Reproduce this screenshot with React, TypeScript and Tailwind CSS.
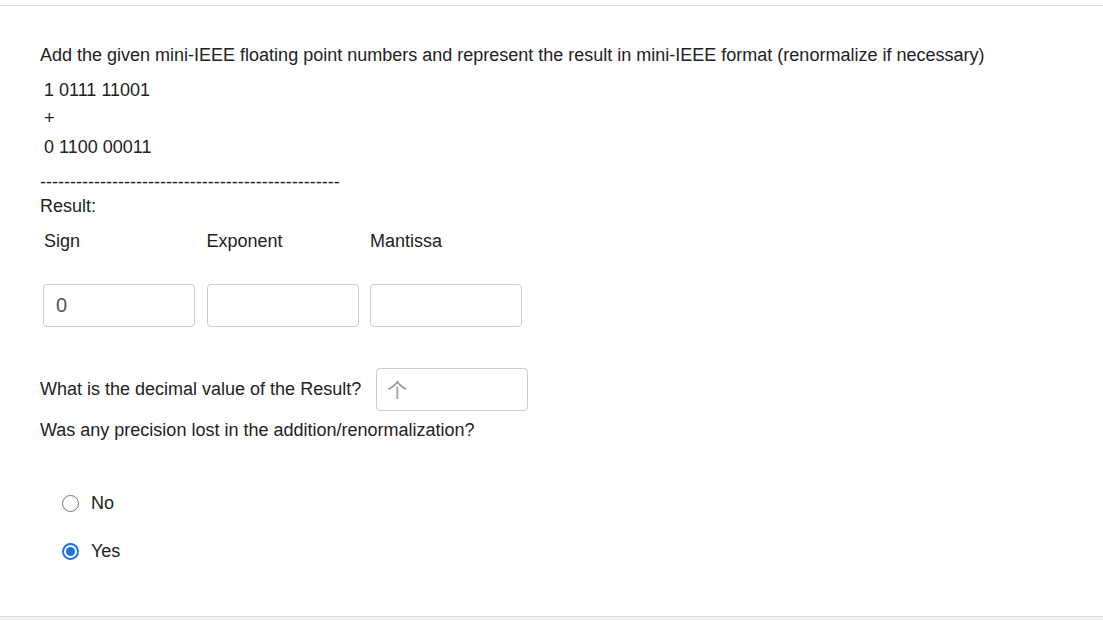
import React from "react";

const FONT = '"Liberation Sans", Arial, "Noto Sans CJK SC", sans-serif';

function Radio({ label, checked }: { label: string; checked?: boolean }) {
  return (
    <label className="flex items-center h-6 pl-[22px] cursor-pointer">
      {checked ? (
        <span className="w-[17px] h-[17px] rounded-full border-2 border-[#1a73e8] flex items-center justify-center">
          <span className="w-[9px] h-[9px] rounded-full bg-[#1a73e8]" />
        </span>
      ) : (
        <span className="w-[17px] h-[17px] rounded-full border border-[#767676] bg-white" />
      )}
      <span className="ml-3">{label}</span>
    </label>
  );
}

const field =
  "mt-[31px] h-[43px] border border-[#cccccc] rounded px-[12px] text-xl text-[#555] outline-none font-['Liberation_Sans',Arial,sans-serif]";

export default function App() {
  const [answer, setAnswer] = React.useState("yes");

  return (
    <div className="min-h-screen bg-[#f2f2f2] text-[18px] text-[#222]" style={{ fontFamily: FONT }}>
      <div className="h-[5px] bg-white" />
      <div className="bg-white border-t border-b border-[#dedede] h-[612px] pt-[37px] pl-10">
        <p className="leading-6">
          Add the given mini-IEEE floating point numbers and represent the result in mini-IEEE format (renormalize if necessary)
        </p>

        <div className="pl-1">
          <div className="leading-6 mt-[11px]">1 0111 11001</div>
          <div className="leading-6 mt-1">+</div>
          <div className="leading-6 mt-[5px]">0 1100 00011</div>
        </div>

        <div className="leading-5 mt-[13px]">{"-".repeat(50)}</div>
        <div className="leading-5 mt-1">Result:</div>

        <div className="grid grid-cols-[152px_152px_152px] gap-x-[11.5px] ml-[3px] mt-[13px]">
          <div className="leading-6 pl-px">Sign</div>
          <div className="leading-6">Exponent</div>
          <div className="leading-6">Mantissa</div>
          <input defaultValue="0" className={field} />
          <input className={field} />
          <input className={field} />
        </div>

        <div className="flex items-center mt-[41px]">
          <span>What is the decimal value of the Result?</span>
          <input
            placeholder="个"
            className="ml-[15px] w-[152px] h-[43px] border border-[#cccccc] rounded px-[10px] text-xl text-[#555] placeholder:text-[#999] outline-none font-['Noto_Sans_CJK_SC',sans-serif]"
          />
        </div>

        <p className="leading-6 mt-[7px]">Was any precision lost in the addition/renormalization?</p>

        <div className="mt-[49px]" onClick={() => setAnswer("no")}>
          <Radio label="No" checked={answer === "no"} />
        </div>
        <div className="mt-6" onClick={() => setAnswer("yes")}>
          <Radio label="Yes" checked={answer === "yes"} />
        </div>
      </div>
    </div>
  );
}
